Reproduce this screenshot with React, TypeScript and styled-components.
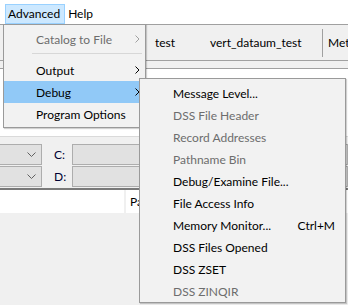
import React from "react";
import styled, { createGlobalStyle } from "styled-components";

const Global = createGlobalStyle`
  html, body { margin: 0; padding: 0; }
  body {
    width: 348px; height: 305px; overflow: hidden;
    background: #f0f0f0;
    font-family: Lato, "Noto Sans", sans-serif;
    font-size: 12px; color: #000;
  }
`;

const Window = styled.div`
  position: relative;
  width: 348px; height: 305px; overflow: hidden;
  display: flex; flex-direction: column;
  background: #f0f0f0;
`;

const MenuBar = styled.div`
  height: 24px; flex: none;
  background: #fff;
  display: flex; align-items: flex-start;
  padding: 4px 0 0 5px; box-sizing: border-box;
`;

const MenuBarItem = styled.div<{ $open?: boolean }>`
  height: 20px; box-sizing: border-box;
  padding: 0 4px 0 2px;
  line-height: 18px;
  border: 1px solid ${(p) => (p.$open ? "#99d1ff" : "transparent")};
  background: ${(p) => (p.$open ? "#cce8ff" : "transparent")};
`;

const HeaderStrip = styled.div`
  height: 36px; flex: none; box-sizing: border-box;
  border-top: 1px solid #a0a0a0;
  display: flex; align-items: center;
  background: #f0f0f0;
`;

const TreePane = styled.div`
  width: 145px; flex: none; align-self: stretch;
`;

const HeaderCell = styled.div<{ $w: number; $pad?: number }>`
  width: ${(p) => p.$w}px; flex: none; box-sizing: border-box;
  padding-left: ${(p) => p.$pad ?? 10}px; white-space: nowrap;
`;

const HeaderDivider = styled.div`
  width: 1px; height: 28px; background: #a0a0a0; flex: none;
  margin-right: 5px;
`;

const SubStrip = styled.div`
  height: 9px; flex: none; box-sizing: border-box;
  border-top: 1px solid #a0a0a0;
  border-bottom: 1px solid #a0a0a0;
  background: #f0f0f0;
`;

const WhiteArea = styled.div`
  height: 68px; flex: none; box-sizing: border-box;
  background: #fff;
  border-bottom: 1px solid #dadada;
  margin-bottom: 3px;
`;

const FieldPanel = styled.div`
  flex: none; height: 50px; box-sizing: border-box;
  background: #f0f0f0;
  padding-top: 4px;
  display: grid;
  grid-template-columns: 42px 30px 1fr;
  grid-auto-rows: 21px;
  row-gap: 1px;
  align-items: center;
  border-bottom: 2px solid #7a7a7a;
`;

const Combo = styled.div`
  height: 21px; box-sizing: border-box;
  background: #e1e1e1;
  border: 1px solid #adadad; border-left: none;
  display: flex; align-items: center; justify-content: flex-end;
  padding-right: 5px;
`;

const FieldLabel = styled.div`
  padding-left: 12px; color: #000033;
`;

const TextBox = styled.div`
  height: 21px; box-sizing: border-box;
  background: #e1e1e1;
  border: 1px solid #adadad;
`;

const ListArea = styled.div`
  height: 23px; flex: none;
  background: #fff;
  display: flex; align-items: center;
`;

const ListSpacer = styled.div`
  width: 124px; align-self: stretch; flex: none;
  border-right: 2px solid #f0f0f0;
`;

const ListHeader = styled.div`
  padding-left: 4px; white-space: nowrap;
  width: 13px; overflow: hidden;
`;

const Popup = styled.div<{ $left: number; $top: number; $width: number }>`
  position: absolute;
  left: ${(p) => p.$left}px; top: ${(p) => p.$top}px;
  width: ${(p) => p.$width}px; box-sizing: border-box;
  background: #f2f2f2;
  border: 1px solid #9a9a9a;
  box-shadow: 1px 1px 1px rgba(0, 0, 0, 0.18);
  display: flex; flex-direction: column;
`;

const MainPopup = styled(Popup)`
  padding: 3px 0 2px 0;
`;

const SubPopup = styled(Popup)`
  padding: 3px 0 0 0;
`;

const Item = styled.div<{ $disabled?: boolean; $hot?: boolean; $pad: number }>`
  height: 22px; flex: none; box-sizing: border-box;
  display: flex; align-items: center;
  padding-left: ${(p) => p.$pad}px; padding-right: 5px;
  color: ${(p) => (p.$disabled ? "#6d6d6d" : "#000")};
  background: ${(p) => (p.$hot ? "#91c9f7" : "transparent")};
  white-space: nowrap;
`;

const ItemLabel = styled.span`
  flex: 1;
`;

const Shortcut = styled.span`
  padding-right: 5px;
`;

const Separator = styled.div`
  height: 9px; flex: none;
  display: flex; align-items: flex-start;
  padding: 3px 3px 0 28px; box-sizing: border-box;
  &::after { content: ""; display: block; height: 1px; flex: 1; background: #d7d7d7; }
`;

const Arrow = ({ color }: { color: string }) => (
  <svg width="5" height="8" viewBox="0 0 5 8" style={{ display: "block" }}>
    <polyline points="0.5,0.5 4,4 0.5,7.5" fill="none" stroke={color} strokeWidth="1" />
  </svg>
);

const Chevron = () => (
  <svg width="9" height="5" viewBox="0 0 9 5" style={{ display: "block" }}>
    <polyline points="0.5,0.5 4.5,4.5 8.5,0.5" fill="none" stroke="#606060" strokeWidth="1" />
  </svg>
);

const debugItems: { label: string; disabled?: boolean; shortcut?: string }[] = [
  { label: "Message Level..." },
  { label: "DSS File Header", disabled: true },
  { label: "Record Addresses", disabled: true },
  { label: "Pathname Bin", disabled: true },
  { label: "Debug/Examine File..." },
  { label: "File Access Info" },
  { label: "Memory Monitor...", shortcut: "Ctrl+M" },
  { label: "DSS Files Opened" },
  { label: "DSS ZSET" },
  { label: "DSS ZINQIR", disabled: true },
];

export default function App() {
  return (
    <Window>
      <Global />
      <MenuBar>
        <MenuBarItem $open>Advanced</MenuBarItem>
        <MenuBarItem>Help</MenuBarItem>
      </MenuBar>
      <HeaderStrip>
        <TreePane />
        <HeaderCell $w={55}>test</HeaderCell>
        <HeaderCell $w={122}>vert_dataum_test</HeaderCell>
        <HeaderDivider />
        <HeaderCell $w={40} $pad={0}>Metadata</HeaderCell>
      </HeaderStrip>
      <SubStrip />
      <WhiteArea />
      <FieldPanel>
        <Combo><Chevron /></Combo>
        <FieldLabel>C:</FieldLabel>
        <TextBox />
        <Combo><Chevron /></Combo>
        <FieldLabel>D:</FieldLabel>
        <TextBox />
      </FieldPanel>
      <ListArea>
        <ListSpacer />
        <ListHeader>Pathname</ListHeader>
      </ListArea>

      <MainPopup $left={3} $top={24} $width={143}>
        <Item $pad={32} $disabled>
          <ItemLabel>Catalog to File</ItemLabel>
          <Arrow color="#a0a0a0" />
        </Item>
        <Separator />
        <Item $pad={32}>
          <ItemLabel>Output</ItemLabel>
          <Arrow color="#000" />
        </Item>
        <Item $pad={32} $hot>
          <ItemLabel>Debug</ItemLabel>
          <Arrow color="#000" />
        </Item>
        <Item $pad={32}>
          <ItemLabel>Program Options</ItemLabel>
        </Item>
      </MainPopup>

      <SubPopup $left={139} $top={78} $width={207}>
        {debugItems.map((it) => (
          <Item key={it.label} $pad={33} $disabled={it.disabled}>
            <ItemLabel>{it.label}</ItemLabel>
            {it.shortcut && <Shortcut>{it.shortcut}</Shortcut>}
          </Item>
        ))}
      </SubPopup>
    </Window>
  );
}
